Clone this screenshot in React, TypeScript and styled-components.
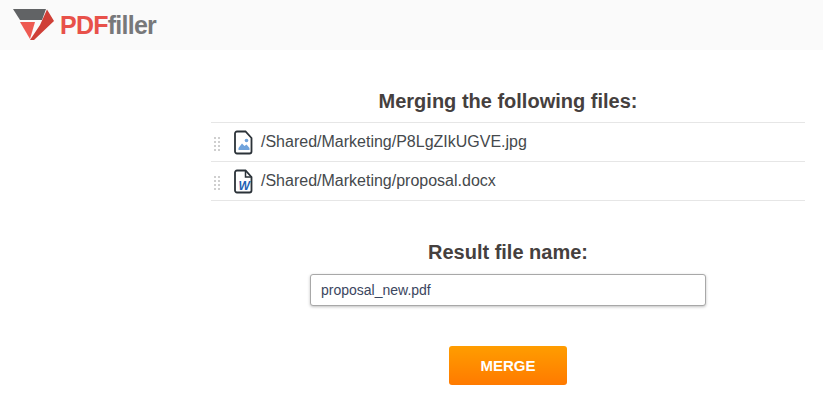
import React from "react";
import styled, { createGlobalStyle } from "styled-components";

const GlobalStyle = createGlobalStyle`
  html, body {
    margin: 0;
    padding: 0;
    background: #fff;
    font-family: "Liberation Sans", Arial, sans-serif;
    overflow: hidden;
  }
`;

const Page = styled.div`
  width: 823px;
  height: 411px;
  display: flex;
  flex-direction: column;
`;

const Header = styled.header`
  height: 50px;
  background: #fafafa;
  display: flex;
  align-items: flex-start;
  padding: 9px 0 0 13px;
  box-sizing: border-box;
`;

const Wordmark = styled.div`
  display: flex;
  align-items: baseline;
  margin: 2px 0 0 5px;
  font-size: 25px;
  line-height: 28px;
  font-weight: 700;
  letter-spacing: -0.75px;
`;

const WordRed = styled.span`
  color: #e8514a;
`;

const WordGrey = styled.span`
  color: #77787a;
`;

const Main = styled.main`
  width: 594px;
  margin-left: 211px;
  display: flex;
  flex-direction: column;
  align-items: center;
`;

const Heading = styled.h2<{ $top: number }>`
  margin: ${(p) => p.$top}px 0 0;
  font-size: 20px;
  line-height: 24px;
  font-weight: 700;
  color: #45403e;
  text-align: center;
`;

const FileList = styled.ul`
  list-style: none;
  margin: 9px 0 0;
  padding: 0;
  width: 100%;
  border-top: 1px solid #e6e6e6;
`;

const FileRow = styled.li`
  height: 38px;
  display: flex;
  align-items: center;
  border-bottom: 1px solid #e6e6e6;
  font-size: 16px;
  color: #45494c;
`;

const Grip = styled.span`
  width: 8px;
  height: 15px;
  margin: 2px 0 0 2px;
  background-image: radial-gradient(#cfcfcf 1.1px, transparent 1.3px);
  background-size: 4px 4px;
`;

const IconWrap = styled.span`
  display: flex;
  margin: 0 8px 0 13px;
`;

const NameInput = styled.input`
  width: 396px;
  height: 32px;
  margin-top: 10px;
  box-sizing: border-box;
  padding: 0 10px;
  border: 1px solid #a8a8a8;
  border-radius: 3px;
  box-shadow: 0 1px 3px rgba(0, 0, 0, 0.25);
  font-family: inherit;
  font-size: 14px;
  color: #3b4660;
  outline: none;
`;

const MergeButton = styled.button`
  width: 118px;
  height: 39px;
  margin-top: 40px;
  border: none;
  border-radius: 3px;
  background: linear-gradient(#ff9d00, #ff7a00);
  color: #fff;
  font-family: inherit;
  font-size: 15px;
  font-weight: 700;
`;

const Logo = () => (
  <svg width="42" height="32" viewBox="0 0 42 32">
    <polygon points="0,0 33,0 29,11 7,11" fill="#616365" />
    <polygon points="7,13 22,13 17,30" fill="#ee5a52" />
    <polygon points="34,0.5 41,12 21,31 17,31 27,16" fill="#cf3f37" />
  </svg>
);

const FileShell = ({ children, fold }: { children: React.ReactNode; fold?: boolean }) => (
  <svg width="19" height="25" viewBox="0 0 19 25" fill="none">
    <path
      d="M3 1.5h8.5l6 6.5v13.5a2 2 0 0 1-2 2H3a2 2 0 0 1-2-2V3.5a2 2 0 0 1 2-2z"
      stroke="#2b3238"
      strokeWidth="1.8"
    />
    {fold && <path d="M11.5 1.5v6.5h6" stroke="#2b3238" strokeWidth="1.5" />}
    {children}
  </svg>
);

const ImageIcon = () => (
  <FileShell>
    <circle cx="12.5" cy="10.5" r="1.8" fill="#6fa3dc" />
    <path d="M4.5 20v-2l3.500-4.500 2.500 2.500 2-1.500 3 3.500v2z" fill="#6fa3dc" />
  </FileShell>
);

const WordLetter = styled.text`
  font-family: "Liberation Sans", Arial, sans-serif;
  font-size: 12px;
  font-weight: 700;
  font-style: italic;
  fill: #1f63b5;
`;

const WordIcon = () => (
  <FileShell fold>
    <WordLetter x="4.500" y="20.500">W</WordLetter>
  </FileShell>
);

const files = [
  { path: "/Shared/Marketing/P8LgZIkUGVE.jpg", icon: <ImageIcon /> },
  { path: "/Shared/Marketing/proposal.docx", icon: <WordIcon /> },
];

export default function App() {
  return (
    <Page>
      <GlobalStyle />
      <Header>
        <Logo />
        <Wordmark>
          <WordRed>PDF</WordRed>
          <WordGrey>filler</WordGrey>
        </Wordmark>
      </Header>
      <Main>
        <Heading $top={39}>Merging the following files:</Heading>
        <FileList>
          {files.map((file) => (
            <FileRow key={file.path}>
              <Grip />
              <IconWrap>{file.icon}</IconWrap>
              {file.path}
            </FileRow>
          ))}
        </FileList>
        <Heading $top={39}>Result file name:</Heading>
        <NameInput defaultValue="proposal_new.pdf" />
        <MergeButton>MERGE</MergeButton>
      </Main>
    </Page>
  );
}
